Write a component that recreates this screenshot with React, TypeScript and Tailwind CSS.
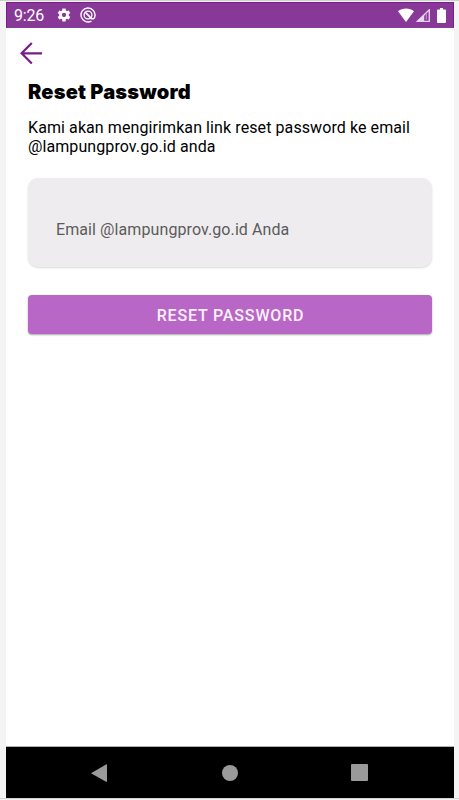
import React, { useState } from 'react';

function StatusBar() {
  return (
    <div className="flex h-[26px] shrink-0 items-center border border-[#7b1a8a] border-b-[#8a3c99] bg-[#883997] pl-[7px] pr-[7px] text-white">
      <span className="w-[42px] pt-0.5 text-base leading-none tracking-[-0.2px]">9:26</span>
      <svg className="h-4 w-4" viewBox="0 0 24 24" fill="currentColor">
        <path d="M19.14 12.94c.04-.3.06-.61.06-.94 0-.32-.02-.64-.07-.94l2.03-1.58a.49.49 0 0 0 .12-.61l-1.92-3.32a.49.49 0 0 0-.59-.22l-2.39.96c-.5-.38-1.03-.7-1.62-.94l-.36-2.54a.48.48 0 0 0-.48-.41h-3.84c-.24 0-.43.17-.47.41l-.36 2.54c-.59.24-1.13.57-1.62.94l-2.39-.96a.48.48 0 0 0-.59.22L2.74 8.87a.48.48 0 0 0 .12.61l2.03 1.58c-.05.3-.09.63-.09.94s.02.64.07.94l-2.03 1.58a.49.49 0 0 0-.12.61l1.92 3.32c.12.22.37.29.59.22l2.39-.96c.5.38 1.03.7 1.62.94l.36 2.54c.05.24.24.41.48.41h3.84c.24 0 .44-.17.47-.41l.36-2.54c.59-.24 1.13-.56 1.62-.94l2.39.96c.22.08.47 0 .59-.22l1.92-3.32a.48.48 0 0 0-.12-.61l-2.01-1.58zM12 15.2a3.2 3.2 0 1 1 0-6.4 3.2 3.2 0 0 1 0 6.4z" />
      </svg>
      <svg
        className="ml-2 h-4 w-4"
        viewBox="0 0 16 16"
        fill="none"
        stroke="currentColor"
      >
        <path
          d="M11.4 14.1A7 7 0 1 1 14.9 9.2C14.7 11.5 13 12.4 11.4 11.4"
          strokeWidth="1.4"
        />
        <circle cx="8" cy="8" r="3.9" strokeWidth="1.3" />
        <path d="M5.2 5.2l6.6 6.6" strokeWidth="1.7" />
      </svg>
      <svg
        className="ml-auto h-[14px] w-4"
        viewBox="0 0 16 14"
        fill="currentColor"
      >
        <path d="M0 3.3C4.5-.4 11.5-.4 16 3.3L8 14z" />
      </svg>
      <svg className="ml-0.5 h-[13px] w-[14px]" viewBox="0 0 14 13">
        <path d="M13.3.8v11.6H1.4z" fill="none" stroke="#e3cde8" strokeWidth="1.4" />
        <path d="M8.2 5.3V12H1z" fill="#e7d7ea" />
        <path d="M10.3 4.5v6" stroke="#c6a0ce" strokeWidth="1" />
      </svg>
      <svg
        className="ml-[7px] h-[15px] w-[9px]"
        viewBox="0 0 9 15"
        fill="currentColor"
      >
        <path d="M3 0h3v1.5h2a1 1 0 0 1 1 1V14a1 1 0 0 1-1 1H1a1 1 0 0 1-1-1V2.5a1 1 0 0 1 1-1h2z" />
      </svg>
    </div>
  );
}

function NavigationBar() {
  return (
    <div className="flex h-[52px] shrink-0 items-center justify-center border-t border-[#b0b0b0] bg-black pr-px">
      <div className="flex w-[277px] items-center justify-between text-[#9a9a9a]">
        <svg className="h-[18px] w-4" viewBox="0 0 16 18" fill="currentColor">
          <path d="M0 9.2L15 .4q1-.5 1 .5v16.3q0 1-1 .5z" />
        </svg>
        <span className="ml-0.5 h-4 w-4 rounded-full bg-[#9a9a9a]" />
        <span className="h-[17px] w-[17px] rounded-[1px] bg-[#9a9a9a]" />
      </div>
    </div>
  );
}

export default function App() {
  const [email, setEmail] = useState<string>('');

  return (
    <div className="h-[800px] w-[459px] overflow-hidden border-t border-[#cfcfcf] bg-[#f4f4f4] pl-1.5 pr-[5px] pt-px font-['Roboto',sans-serif]">
      <div className="flex h-[796px] flex-col bg-white">
        <StatusBar />
        <main className="flex-1 px-[22px] text-black">
          <button type="button" aria-label="Kembali" className="-ml-2 mt-[14px] block">
            <svg
              className="h-[22px] w-[22px]"
              viewBox="0 0 22 22"
              fill="none"
              stroke="#7b1a8c"
              strokeWidth="2.2"
            >
              <path d="M22 11.3H2M11.8 1L1.6 11.3l10.2 10.2" />
            </svg>
          </button>
          <h1 className="mt-[14px] text-xl font-black leading-7 tracking-[0.2px] font-['Inter',sans-serif]">
            Reset Password
          </h1>
          <p className="mt-3 text-base leading-[19px] tracking-[0.09px]">
            Kami akan mengirimkan link reset password ke email
            <br />
            @lampungprov.go.id anda
          </p>
          <form onSubmit={(e) => e.preventDefault()}>
            <input
              id="email"
              name="email"
              type="text"
              placeholder="Email @lampungprov.go.id Anda"
              value={email}
              onChange={(e) => setEmail(e.target.value)}
              className="mt-[22px] block h-[89px] w-full rounded-[10px] bg-[#eeecee] px-7 pt-[13px] text-base tracking-[0.09px] shadow-[0_1px_2px_rgba(0,0,0,0.15)] outline-none placeholder:text-[#5c5b5c]"
            />
            <button
              type="submit"
              className="mt-7 block h-[39px] w-full rounded-[4px] bg-[#b867c7] pt-0.5 pl-px text-base font-medium tracking-[0.84px] text-[#fbf1fc] shadow-[0_1px_2px_rgba(0,0,0,0.35)]"
            >
              RESET PASSWORD
            </button>
          </form>
        </main>
        <NavigationBar />
      </div>
      <div className="-ml-1.5 -mr-[5px] h-px bg-[#d4d4d4]" />
    </div>
  );
}
